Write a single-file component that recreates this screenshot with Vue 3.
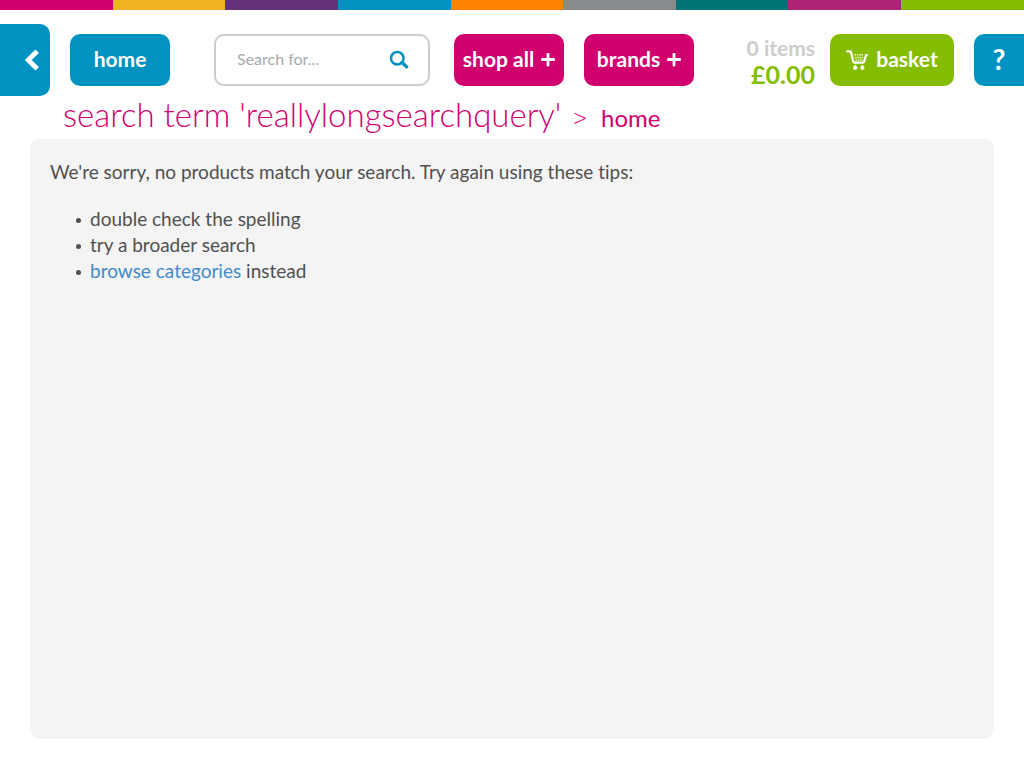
<script setup>
import { ref } from 'vue'

const stripes = ['pink', 'yellow', 'purple', 'blue', 'orange', 'grey', 'teal', 'magenta', 'green']
const menus = ['shop all', 'brands']
const query = ref('')
</script>

<template>
  <div class="page">
    <div class="stripes" aria-hidden="true">
      <span v-for="name in stripes" :key="name" :class="name"></span>
    </div>

    <header class="bar">
      <button class="btn back" type="button" aria-label="Back">
        <svg width="14" height="22" viewBox="0 0 14 22" aria-hidden="true">
          <path d="M12.2 2.2 L3.2 11 L12.2 19.8" fill="none" stroke="#fff" stroke-width="4.8" />
        </svg>
      </button>
      <a class="btn home" href="#"><span>home</span></a>

      <form class="search" role="search" @submit.prevent>
        <input v-model="query" type="text" placeholder="Search for..." aria-label="Search for" />
        <button type="submit" aria-label="Search">
          <svg width="20" height="20" viewBox="0 0 20 20" aria-hidden="true">
            <circle cx="8.3" cy="8.2" r="6.3" fill="none" stroke="#0092c0" stroke-width="2.5" />
            <path d="M13 12.6 L17.6 16.8" stroke="#0092c0" stroke-width="3.4" stroke-linecap="round" />
          </svg>
        </button>
      </form>

      <nav class="menus">
        <button v-for="menu in menus" :key="menu" class="btn menu" type="button">
          <span>{{ menu }}</span>
          <svg width="14" height="14" viewBox="0 0 14 14" aria-hidden="true">
            <path d="M1.3 6.5 H12.7 M7 0.8 V12.2" stroke="#fff" stroke-width="2.8" stroke-linecap="round" />
          </svg>
        </button>
      </nav>

      <div class="totals">
        <span class="count">0 items</span>
        <span class="price">£0.00</span>
      </div>
      <a class="btn basket" href="#">
        <svg width="22" height="22" viewBox="0 0 22 22" aria-hidden="true">
          <path d="M1.2 2.4 H4 Q4.8 2.4 5.1 3.4 L7.2 12.4 Q7.5 13.6 8.6 13.6 H16.8 Q17.9 13.6 18.2 12.6 L20 6.2 H21" fill="none" stroke="#fff" stroke-width="2.2" stroke-linecap="round" stroke-linejoin="round" />
          <path d="M8.4 5.8 H17.6 M8.8 8.4 H17.2 M9.4 11 H16.8" stroke="#fff" stroke-width="1.5" stroke-dasharray="1.6 0.7" opacity="0.8" />
          <circle cx="9.2" cy="18.8" r="2.1" fill="#fff" />
          <circle cx="16.4" cy="18.8" r="2.1" fill="#fff" />
          <path d="M9.2 16 V17 M16.4 16 V17" stroke="#fff" stroke-width="1.2" />
        </svg>
        <span>basket</span>
      </a>
      <button class="btn help" type="button" aria-label="Help"><span>?</span></button>
    </header>

    <div class="crumbs">
      <h1>search term 'reallylongsearchquery'</h1>
      <span class="sep">&gt;</span>
      <a href="#">home</a>
    </div>

    <main class="panel">
      <p>We're sorry, no products match your search. Try again using these tips:</p>
      <ul>
        <li>double check the spelling</li>
        <li>try a broader search</li>
        <li><a href="#">browse categories</a> instead</li>
      </ul>
    </main>
  </div>
</template>

<style>
body {
  background: #fff;
}
</style>

<style scoped>
.page {
  font-family: Lato, "Open Sans", sans-serif;
  font-variant-ligatures: none;
  color: #505050;
}

.page * {
  box-sizing: border-box;
}

.stripes {
  display: grid;
  grid-template-columns: repeat(8, 11%) 1fr;
  height: 10px;
}

.pink { background: #d0006f; }
.yellow { background: #f0b323; }
.purple { background: #653279; }
.blue { background: #0092c0; }
.orange { background: #ff8200; }
.grey { background: #888b8d; }
.teal { background: #007377; }
.magenta { background: #ac2473; }
.green { background: #84bd00; }

.bar {
  display: flex;
  align-items: center;
  padding-top: 14px;
}

.btn {
  display: flex;
  align-items: center;
  justify-content: center;
  flex: none;
  height: 52px;
  padding: 0;
  border: 0;
  border-radius: 10px;
  color: #fff;
  font: bold 21px/26px Lato, "Open Sans", sans-serif;
  text-decoration: none;
  white-space: nowrap;
  cursor: pointer;
}

.btn span {
  padding-bottom: 2px;
}

.back {
  width: 50px;
  height: 72px;
  justify-content: flex-end;
  padding-right: 11px;
  border-radius: 0 10px 10px 0;
  background: #0092c0;
}

.home {
  width: 100px;
  margin-left: 20px;
  background: #0092c0;
}

.search {
  display: flex;
  align-items: center;
  width: 216px;
  height: 52px;
  margin: 0 24px 0 44px;
  padding: 0 19px 0 21px;
  border: 2px solid #ccc;
  border-radius: 10px;
}

.search input {
  flex: 1;
  min-width: 0;
  padding: 0 0 2px;
  border: 0;
  outline: 0;
  background: none;
  color: #505050;
  font: 16px/24px Lato, "Open Sans", sans-serif;
}

.search input::placeholder {
  color: #aaa;
  opacity: 1;
}

.search button {
  display: flex;
  padding: 0;
  border: 0;
  background: none;
  cursor: pointer;
}

.menus {
  display: flex;
  gap: 20px;
}

.menu {
  gap: 7px;
  width: 110px;
  background: #d0006f;
}

.totals {
  display: flex;
  flex-direction: column;
  margin-left: auto;
  padding-top: 2px;
  font-weight: bold;
  line-height: 26px;
  text-align: right;
}

.count {
  color: #ccc;
  font-size: 21px;
}

.price {
  color: #84bd00;
  font-size: 25px;
}

.basket {
  gap: 8px;
  width: 124px;
  margin-left: 15px;
  background: #84bd00;
}

.help {
  width: 50px;
  margin-left: 20px;
  border-radius: 10px 0 0 10px;
  background: #0092c0;
  font-size: 28px;
}

.crumbs {
  display: flex;
  align-items: baseline;
  padding: 0 30px 3px 63px;
  color: #d0006f;
  line-height: 36px;
}

.crumbs h1 {
  margin: 0;
  font-size: 33px;
  font-weight: 300;
}

.crumbs .sep {
  margin: 0 14px 0 12px;
  font-family: "Open Sans", sans-serif;
  font-size: 24px;
  font-weight: 300;
}

.crumbs a {
  color: #d0006f;
  font-size: 24px;
  text-decoration: none;
}

.panel {
  min-height: 600px;
  margin: 0 30px 29px;
  padding: 20px;
  border-radius: 10px;
  background: #f4f4f4;
  font-size: 19px;
  line-height: 26px;
}

.panel p {
  margin: 0 0 21px;
}

.panel ul {
  margin: 0;
  padding-left: 40px;
  list-style: none;
}

.panel li::before {
  content: "";
  display: inline-block;
  width: 5px;
  height: 5px;
  margin: 0 9px 2px -14px;
  border-radius: 50%;
  background: currentColor;
  vertical-align: middle;
}

.panel a {
  color: #428bca;
  text-decoration: none;
}
</style>
